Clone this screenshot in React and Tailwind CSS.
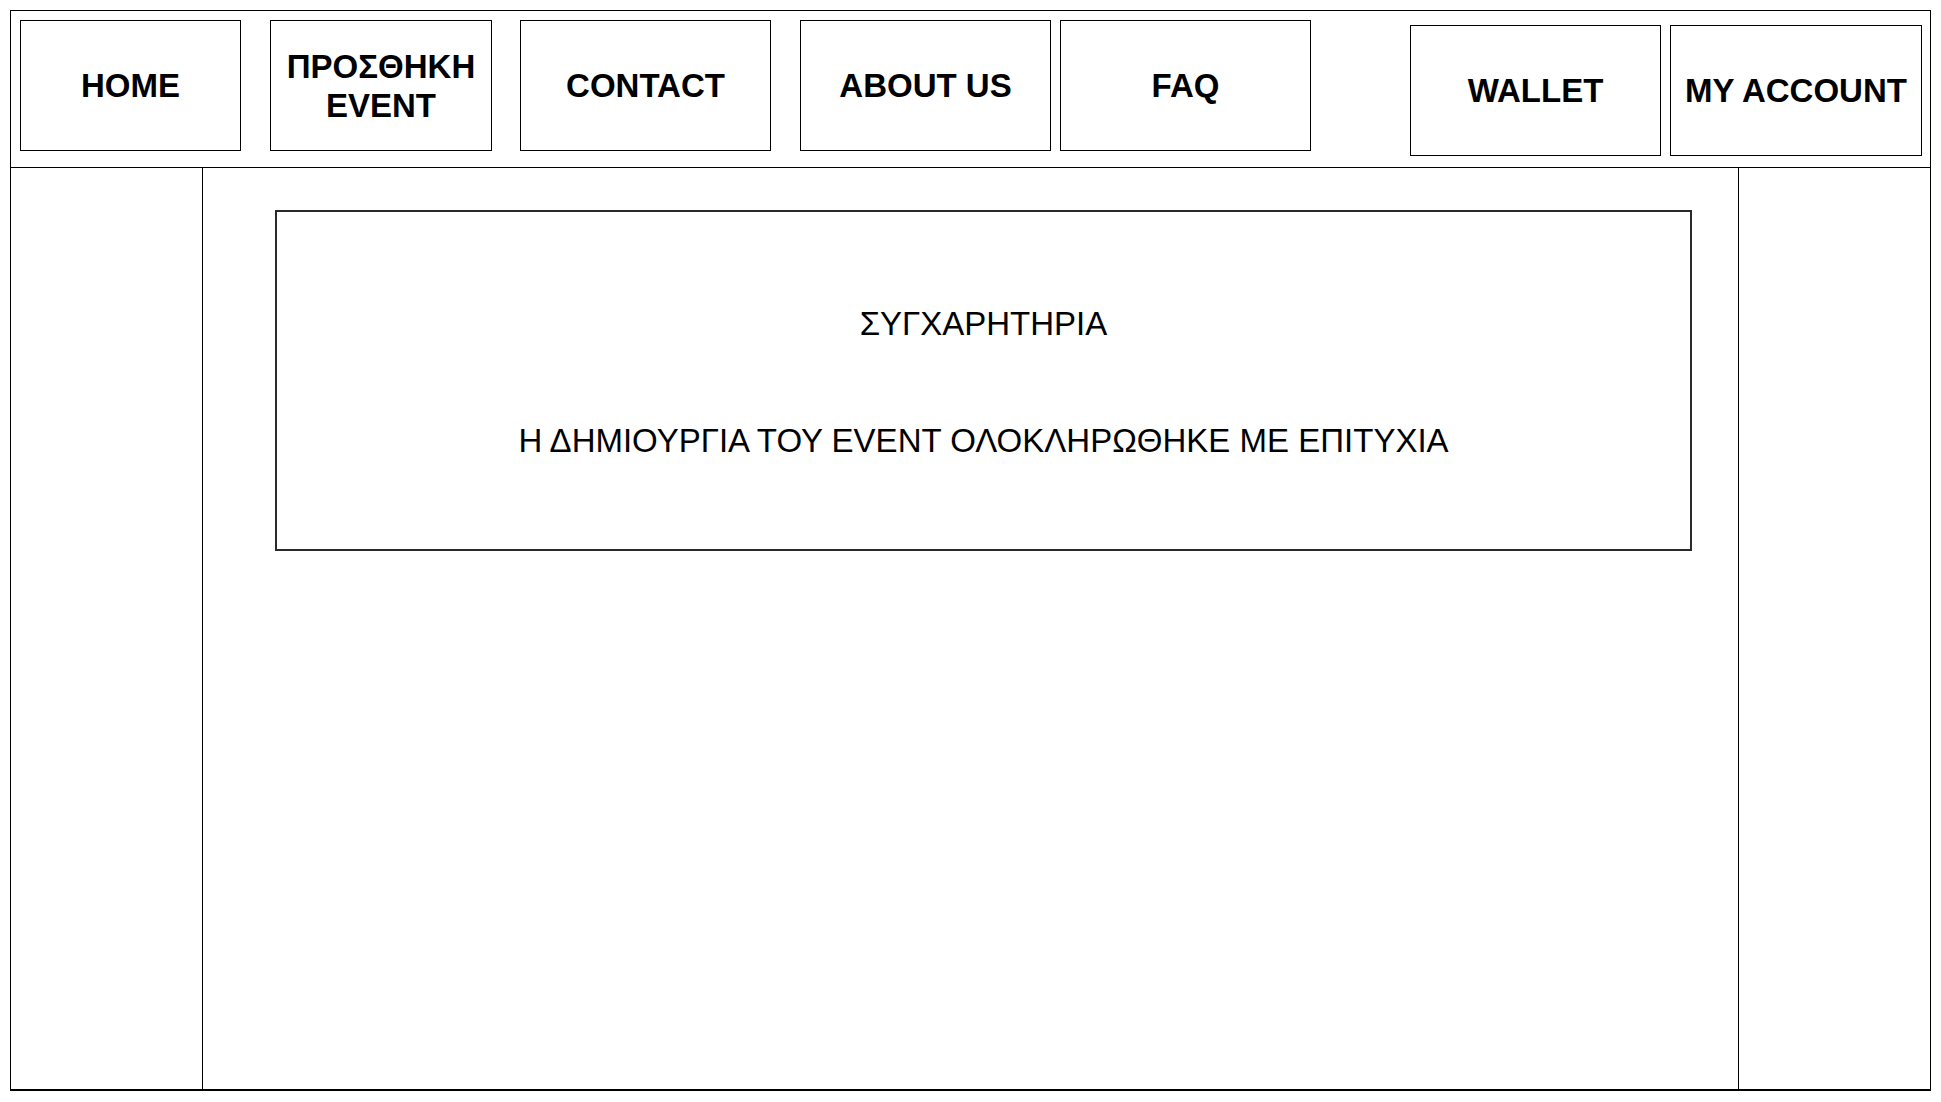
export default function App() {
  const box = "flex items-center justify-center border border-black text-center text-[33px] font-bold leading-[39px] text-black h-[131px] shrink-0";
  return (
    <div className="w-[1941px] h-[1102px] bg-white font-['Liberation_Sans',Arial,sans-serif] pt-[10px] pl-[10px]">
      <div className="w-[1921px] h-[1081px] border-t border-l border-r border-b-2 border-black flex flex-col">
        <header className="h-[157px] shrink-0 border-b border-black flex items-start pt-[9px] pl-[9px]">
          <div className={box + " w-[221px]"}>HOME</div>
          <div className={box + " w-[222px] ml-[29px]"}>ΠΡΟΣΘΗΚΗ<br />EVENT</div>
          <div className={box + " w-[251px] ml-[28px]"}>CONTACT</div>
          <div className={box + " w-[251px] ml-[29px]"}>ABOUT US</div>
          <div className={box + " w-[251px] ml-[9px]"}>FAQ</div>
          <div className={box + " w-[251px] ml-[99px] mt-[5px]"}>WALLET</div>
          <div className={box + " w-[252px] ml-[9px] mt-[5px]"}>MY ACCOUNT</div>
        </header>
        <div className="flex flex-1">
          <aside className="w-[192px] shrink-0 border-r border-black" />
          <main className="flex-1 pt-[42px] pl-[72px]">
            <div className="w-[1417px] h-[341px] border-2 border-[#2a2a2a] flex flex-col items-center pt-[93px] text-[33px] leading-[37px] text-black">
              <p>ΣΥΓΧΑΡΗΤΗΡΙΑ</p>
              <p className="mt-[80px]">Η ΔΗΜΙΟΥΡΓΙΑ ΤΟΥ EVENT ΟΛΟΚΛΗΡΩΘΗΚΕ ΜΕ ΕΠΙΤΥΧΙΑ</p>
            </div>
          </main>
          <aside className="w-[192px] shrink-0 border-l border-black" />
        </div>
      </div>
    </div>
  );
}
